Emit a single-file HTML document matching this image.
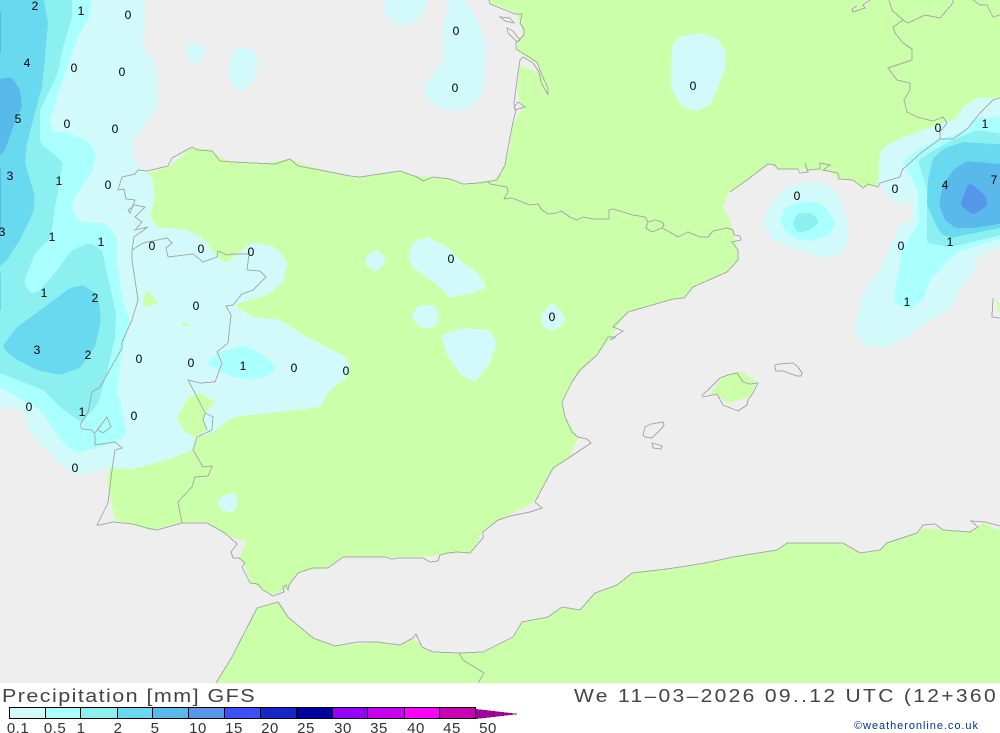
<!DOCTYPE html>
<html><head><meta charset="utf-8"><style>
html,body{margin:0;padding:0;background:#fff;width:1000px;height:733px;overflow:hidden}
svg{display:block}
text{font-family:"Liberation Sans",sans-serif}
</style></head><body>
<svg width="1000" height="733" viewBox="0 0 1000 733" xmlns="http://www.w3.org/2000/svg">
<defs>
<filter id="r" filterUnits="userSpaceOnUse" x="-20" y="-20" width="1040" height="730" color-interpolation-filters="sRGB">
<feGaussianBlur stdDeviation="2.2"/>
<feComponentTransfer><feFuncA type="discrete" tableValues="0 1"/></feComponentTransfer>
</filter>
</defs>
<rect width="1000" height="733" fill="#fff"/>
<rect width="1000" height="683" fill="#eeeeee"/>
<g shape-rendering="crispEdges">
<!-- land -->
<polygon fill="#ccffaa" points="148,173 170,166 192,147 212,150 220,157 233,162 265,163 290,159 300,163 320,169 350,177 360,177 380,173 400,172 417,176 432,177 450,178 463,184 483,181 493,180 503,170 510,147 513,123 523,108 518,97 518,87 520,65 537,72 540,72 538,65 523,55 516,48 520,40 523,33 520,23 516,13 490,3 490,0 1000,0 1000,98 980,113 967,130 938,140 922,152 902,177 878,185 863,188 853,180 838,178 830,172 798,169 778,169 770,164 747,180 730,192 728,193 723,208 730,220 733,233 738,247 738,260 727,272 693,287 683,298 653,305 628,312 620,323 610,340 597,355 580,372 572,382 562,403 567,420 578,437 570,457 550,473 533,503 498,520 483,532 472,552 440,555 423,557 343,557 328,567 298,573 288,588 273,595 263,590 250,582 245,565 239,558 247,542 225,535 207,522 182,523 150,530 115,520 107,480 110,468 120,300"/>
<polygon fill="#ccffaa" points="216,683 232,657 257,608 278,602 288,617 313,638 335,646 377,642 400,645 413,638 422,647 433,652 460,653 483,652 513,637 522,622 548,617 562,607 580,610 595,593 617,585 632,573 667,569 693,565 710,562 733,557 777,550 787,543 843,543 860,553 880,550 887,543 917,533 923,528 943,530 970,532 983,523 1000,530 1000,683"/>
<polygon fill="#ccffaa" points="710,395 720,380 733,372 743,372 757,382 750,397 727,403 720,397"/>
<polygon fill="#ccffaa" points="996,300 1000,304 1000,314 997,308"/>
<polygon fill="#eeeeee" points="862,6 868,0 871,0 865,7"/>
<!-- 0.1 -->
<g fill="#d2fafa" filter="url(#r)">
<polygon points="-10,-10 142,-10 146,13 143,45 157,68 158,107 133,142 132,157 143,170 153,180 155,197 150,217 157,227 187,230 205,240 217,257 226,264 240,252 253,242 277,248 288,263 283,282 267,295 233,305 253,317 280,320 300,333 347,358 350,370 347,377 330,390 320,407 270,413 233,417 213,432 195,438 193,450 167,460 133,469 110,468 77,476 63,467 43,447 28,430 23,410 -10,405"/>
<polygon points="383,-10 431,-10 423,15 410,25 393,23 385,13"/>
<polygon points="442,30 447,10 452,-10 460,-10 477,20 486,40 485,73 482,95 470,108 457,111 438,108 425,95 424,87 443,60"/>
<polygon points="678,37 700,33 717,38 726,53 725,70 710,105 695,111 682,107 671,87 672,47"/>
<polygon points="185,48 195,41 206,50 203,58 195,65 190,62"/>
<polygon points="228,68 232,53 243,45 257,53 257,70 252,83 240,93 232,83"/>
<polygon points="365,258 376,249 386,258 383,266 375,272 366,265"/>
<polygon points="408,257 413,242 428,237 447,247 463,263 478,273 487,287 473,293 450,298 438,285 413,268"/>
<polygon points="411,315 420,305 435,305 439,315 437,325 425,329 417,325"/>
<polygon points="441,335 463,328 490,330 497,343 490,363 475,382 462,376 448,357"/>
<polygon points="540,317 552,302 566,317 562,327 552,331 543,327"/>
<polygon points="218,503 220,497 235,492 238,503 232,514 218,508"/>
<polygon points="763,223 770,203 790,185 823,181 840,197 848,223 848,243 840,255 823,258 800,250 773,240"/>
<polygon points="1010,98 978,98 963,107 957,118 923,130 890,143 880,152 878,183 890,197 898,206 910,197 912,220 902,222 890,247 878,272 863,293 854,333 863,345 887,348 913,332 952,307 967,278 976,267 977,257 1010,243"/>
</g>
<!-- green patches within rain -->
<g fill="#ccffaa">
<polygon points="143,300 147,290 158,303 148,307 144,305"/>
<polygon points="182,323 193,324 183,327"/>
<polygon points="177,418 188,397 200,393 215,402 207,412 203,418 207,430 195,437 185,432"/>
</g>
<!-- 0.5 -->
<g fill="#aaffff" filter="url(#r)">
<polygon points="-10,-10 92,-10 90,17 78,37 63,80 50,120 53,133 68,132 90,142 96,155 93,170 73,200 72,210 80,222 105,223 117,237 117,260 122,297 130,322 122,353 117,390 127,433 117,442 97,448 77,453 63,443 40,410 -10,382"/>
<polygon points="205,363 220,352 243,345 263,355 277,367 267,377 247,380 227,375"/>
<polygon points="780,222 785,207 802,201 822,203 836,222 830,235 808,242 788,235"/>
<polygon points="1010,116 973,118 967,130 938,140 920,148 902,162 907,170 918,190 919,222 903,247 895,290 894,302 908,310 923,300 930,280 957,252 1010,236"/>
</g>
<!-- 1 -->
<g fill="#8cf0f0" filter="url(#r)">
<polygon points="-10,-10 72,-10 72,17 63,47 58,73 40,110 40,143 63,162 55,207 50,243 90,243 102,250 107,273 116,313 115,337 107,373 98,403 82,423 60,407 43,390 -10,369"/>
<polygon points="792,223 798,213 812,213 820,222 810,230 798,233"/>
<polygon points="1010,135 977,130 948,142 918,160 927,190 927,243 950,247 1010,233"/>
</g>
<polygon fill="#aaffff" filter="url(#r)" points="52,236 35,253 24,282 30,293 38,292 55,273 72,250 90,243 102,250 102,236"/>
<!-- 2 -->
<g fill="#69d9f0" filter="url(#r)">
<polygon points="-10,-10 42,-10 48,23 45,57 42,87 35,113 27,143 25,163 35,197 33,213 20,240 7,260 -10,275"/>
<polygon points="70,288 83,285 98,295 101,320 95,347 80,368 60,375 37,370 12,357 2,347 17,327 43,308"/>
<polygon points="1010,145 963,142 945,148 933,158 928,180 927,205 940,233 950,238 1010,226"/>
</g>
<rect x="0" y="273" width="1" height="37" fill="#69d9f0"/>
<!-- 5 -->
<g fill="#5ab9eb" filter="url(#r)">
<polygon points="-10,80 12,77 20,90 22,107 13,127 5,150 -10,165"/>
<polygon points="1010,165 967,161 953,170 943,185 939,205 945,220 955,228 975,228 1010,222"/>
</g>
<rect x="0" y="12" width="1" height="41" fill="#5ab9eb"/>
<rect x="0" y="167" width="1" height="66" fill="#5ab9eb"/>
<polygon fill="#5596eb" filter="url(#r)" points="969,182 986,196 988,205 973,215 960,205"/>
</g>
<!-- coasts -->
<g fill="none" stroke="#aaaaaa" stroke-width="1" shape-rendering="crispEdges">
<polyline points="132,260 132,250 134,237 148,227 135,230 142,222 135,217 145,207 135,205 128,210 130,213 135,200 126,199 124,189 118,190 122,177 135,174 138,170 147,171 168,166 172,158 192,147 197,150 212,151 220,161 232,162 275,164 290,159 298,166 320,170 350,176 360,177 380,174 400,171 417,177 423,181 433,177 450,179 463,184 480,183 497,180 505,165 507,153 513,122 516,110 514,107 518,102 525,107 515,110 514,103 518,73 520,60 523,57 533,63 539,72 541,82 548,95 548,88 542,75 537,62 516,49 516,43 524,35 524,29 520,23 522,14 515,14 490,4 489,0"/>
<polygon points="500,17 510,18 514,23 505,21"/>
<polygon points="507,28 513,31 520,40 517,42 508,33"/>
<polyline points="488,181 490,184 507,187 508,192 504,199 512,198 530,205 538,204 542,210 548,214 557,213 561,211 570,217 577,220 583,217 593,219 609,219 609,210 613,209 633,215 645,217 648,222 646,228 652,232 662,228 675,235 678,237 688,232 700,237 708,237 713,231 727,228 733,230 734,235 740,236 741,240 732,242 738,250 738,260 727,272 693,287 684,298 673,299 628,312 613,327 623,331 610,340 616,337 608,337 597,355 580,370 572,382 562,402 565,417 572,432 578,437 587,439 591,443 570,457 553,468 535,502 542,508 530,512 510,516 498,520 483,532 483,538 470,553 457,552 447,553 440,555 438,561 430,562 423,558 398,558 392,559 385,557 358,557 343,557 328,568 312,568 298,573 289,585 288,590 286,585 283,587 284,592 273,596 263,590 258,584 250,583 242,567 245,563 239,558 233,558 231,552 237,544 225,533 207,523 182,523 157,530 147,528 133,524 113,522 100,525 97,525 108,503 112,470 115,450 122,448 115,442 95,445 95,435 92,430 82,429 80,425 88,412 92,392 100,387 122,348 122,342 132,320 138,300 132,260"/>
<polyline points="95,433 107,417 111,427 103,433 98,430"/>
<polyline points="648,222 655,220 662,222 664,225 662,228"/>
<polyline points="132,250 143,243 167,238 172,243 166,248 168,257 193,254 203,262 217,257 218,251 227,255 233,254 249,254 247,270 260,271 266,277 253,290 242,294 233,305 226,306 231,315 228,343 217,352 222,363 215,382 200,383 188,380 197,397 205,413 213,417 212,430 197,437 193,450 203,467 212,466 208,476 195,477 192,487 178,502 182,523"/>
<polyline points="205,413 203,420 207,430"/>
<polygon points="702,395 708,390 713,385 720,378 728,375 737,373 743,382 750,384 758,383 753,393 748,400 747,405 738,411 723,405 717,394 703,397"/>
<polygon points="775,365 779,364 793,363 798,367 802,373 801,376 797,376 783,371 776,371 775,368"/>
<polygon points="645,427 651,424 663,422 664,425 662,428 652,438 645,437 643,435"/>
<polygon points="652,443 662,446 661,449 653,448"/>
<polyline points="870,0 863,5 865,8 853,12 852,9 857,6"/>
<polyline points="889,0 892,10 903,20 893,27 895,33 903,43 912,49 912,60 897,65 888,68 897,80 910,83 910,90 904,100 907,112 917,117 933,121 943,117 947,123 940,132 940,139 953,139 968,128 980,113 993,100 1000,98"/>
<polyline points="903,20 908,23 925,15 940,18 953,3 953,0"/>
<polyline points="973,0 980,5 987,5 993,17 1000,15"/>
<polyline points="730,192 747,180 768,164 775,165 778,169 798,169 800,173 808,172 805,163 807,170 820,169 820,163 830,165 823,170 838,173 839,179 853,180 863,188 868,184 878,187 880,183 900,177 902,170 922,152 940,139"/>
<polyline points="993,298 992,317 1000,318"/>
<polyline points="459,653 463,660 484,673 478,683"/>
<polyline points="216,683 232,657 257,608 278,602 288,617 313,638 335,646 358,642 377,642 400,645 413,638 416,634 422,647 433,652 460,653 483,652 513,637 522,622 548,617 562,607 580,610 595,593 617,585 632,573 667,569 693,565 710,562 733,557 777,550 787,543 843,543 860,553 880,550 887,543 917,533 923,525 935,524 943,530 970,532 978,527 971,521 985,522 1000,526"/>
</g>
<!-- value labels -->
<g font-size="12" fill="#000" text-anchor="middle">
<text x="35" y="10">2</text><text x="81" y="15">1</text><text x="128" y="19">0</text><text x="27" y="67">4</text><text x="74" y="72">0</text><text x="122" y="76">0</text><text x="18" y="123">5</text><text x="67" y="128">0</text><text x="115" y="133">0</text><text x="10" y="180">3</text><text x="59" y="185">1</text><text x="108" y="189">0</text><text x="2" y="236">3</text><text x="52" y="241">1</text><text x="101" y="246">1</text><text x="152" y="250">0</text><text x="201" y="253">0</text><text x="251" y="256">0</text><text x="44" y="297">1</text><text x="95" y="302">2</text><text x="196" y="310">0</text><text x="37" y="354">3</text><text x="88" y="359">2</text><text x="139" y="363">0</text><text x="191" y="367">0</text><text x="243" y="370">1</text><text x="294" y="372">0</text><text x="346" y="375">0</text><text x="29" y="411">0</text><text x="82" y="416">1</text><text x="134" y="420">0</text><text x="75" y="472">0</text><text x="456" y="35">0</text><text x="455" y="92">0</text><text x="693" y="90">0</text><text x="451" y="263">0</text><text x="552" y="321">0</text><text x="797" y="200">0</text><text x="938" y="132">0</text><text x="985" y="128">1</text><text x="895" y="193">0</text><text x="945" y="189">4</text><text x="994" y="184">7</text><text x="901" y="250">0</text><text x="950" y="246">1</text><text x="907" y="306">1</text>
</g>
<!-- legend -->
<g shape-rendering="crispEdges">
<rect x="9" y="708" width="36" height="10" fill="#d2fafa"/><rect x="45" y="708" width="35" height="10" fill="#aaffff"/><rect x="80" y="708" width="37" height="10" fill="#8cf0f0"/><rect x="117" y="708" width="35" height="10" fill="#69d9f0"/><rect x="152" y="708" width="36" height="10" fill="#5ab9eb"/><rect x="188" y="708" width="36" height="10" fill="#5596eb"/><rect x="224" y="708" width="36" height="10" fill="#3c50f5"/><rect x="260" y="708" width="36" height="10" fill="#1428c8"/><rect x="296" y="708" width="36" height="10" fill="#0000a0"/><rect x="332" y="708" width="35" height="10" fill="#9600fa"/><rect x="367" y="708" width="37" height="10" fill="#c800f0"/><rect x="404" y="708" width="35" height="10" fill="#ff00ff"/><rect x="439" y="708" width="36" height="10" fill="#c800b4"/>
<rect x="9" y="707" width="466" height="1" fill="#000"/><rect x="9" y="718" width="466" height="1" fill="#000"/>
<g fill="#000"><rect x="9" y="707" width="1" height="12"/><rect x="45" y="707" width="1" height="12"/><rect x="80" y="707" width="1" height="12"/><rect x="117" y="707" width="1" height="12"/><rect x="152" y="707" width="1" height="12"/><rect x="188" y="707" width="1" height="12"/><rect x="224" y="707" width="1" height="12"/><rect x="260" y="707" width="1" height="12"/><rect x="296" y="707" width="1" height="12"/><rect x="332" y="707" width="1" height="12"/><rect x="367" y="707" width="1" height="12"/><rect x="404" y="707" width="1" height="12"/><rect x="439" y="707" width="1" height="12"/><rect x="475" y="707" width="1" height="12"/></g>
<polygon points="476,709 519,714 476,719" fill="#a00096"/>
</g>
<g font-size="15" fill="#333" text-anchor="middle" letter-spacing="0.5">
<text x="18" y="733">0.1</text><text x="55" y="733">0.5</text><text x="81" y="733">1</text><text x="118" y="733">2</text><text x="155" y="733">5</text><text x="198" y="733">10</text><text x="234" y="733">15</text><text x="270" y="733">20</text><text x="306" y="733">25</text><text x="343" y="733">30</text><text x="379" y="733">35</text><text x="416" y="733">40</text><text x="452" y="733">45</text><text x="488" y="733">50</text>
</g>
<text x="2" y="702" font-size="18" fill="#444" letter-spacing="1.2" textLength="254" lengthAdjust="spacingAndGlyphs">Precipitation [mm] GFS</text>
<text x="574" y="702" font-size="18" fill="#444" letter-spacing="2" textLength="424" lengthAdjust="spacingAndGlyphs">We 11–03–2026 09..12 UTC (12+360</text>
<text x="854" y="729" font-size="11" fill="#0033a0" textLength="124" lengthAdjust="spacing">©weatheronline.co.uk</text>
</svg>
</body></html>
